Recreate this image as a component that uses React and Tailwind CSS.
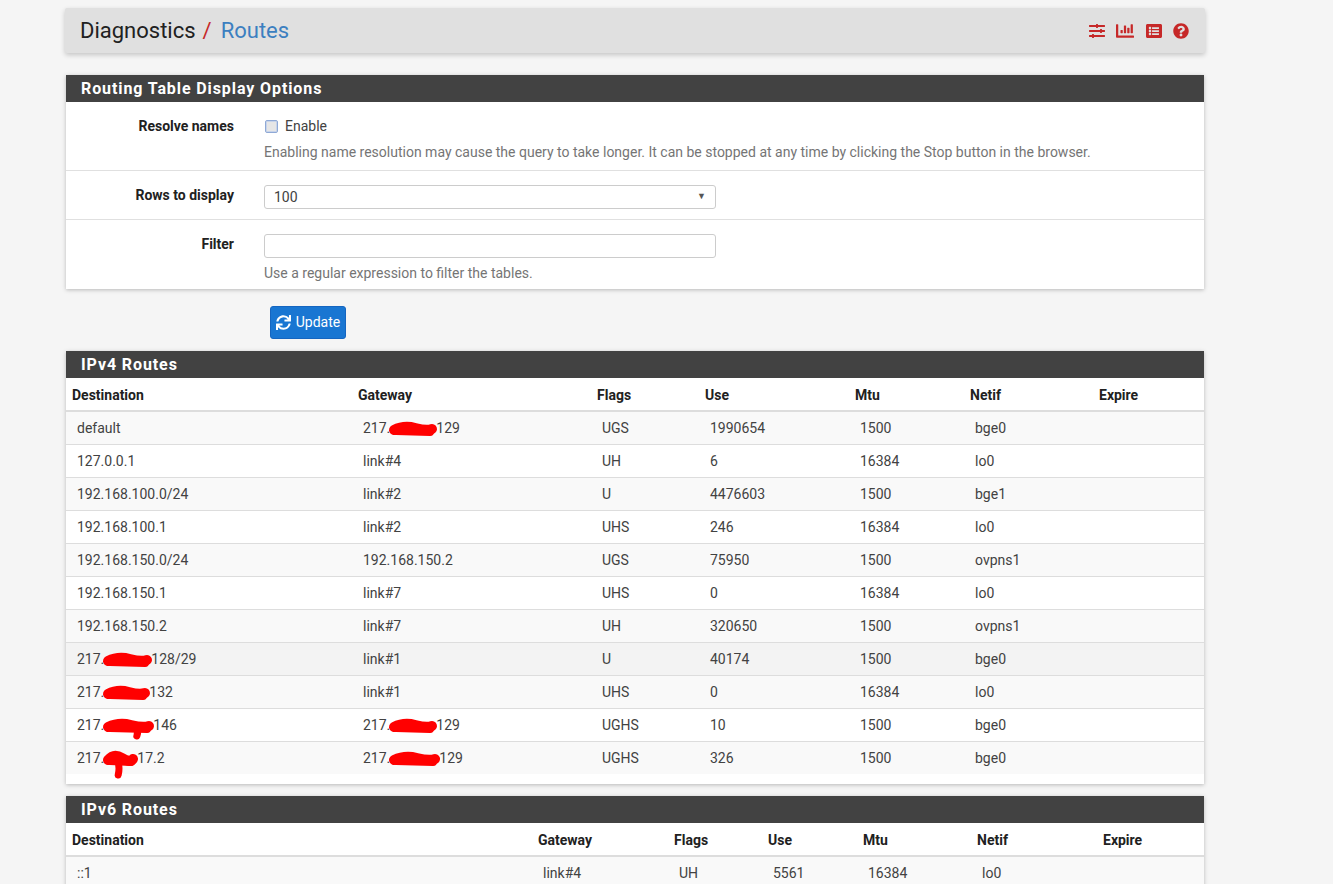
import React from "react";
import { FaSlidersH, FaChartBar, FaListAlt, FaQuestionCircle, FaSync } from "react-icons/fa";

function Redact({ w, drip = 0, dripX = 0.5, bump = 0 }) {
  const h = 14;
  return (
    <span className="relative inline-block align-middle" style={{ width: w, height: h }}>
      <svg
        className="absolute left-0 top-0 overflow-visible"
        width={w}
        height={h}
        viewBox={`0 0 ${w} ${h}`}
      >
        <path
          d={`M4 ${h / 2 + 1} Q ${w * 0.3} ${h / 2 - 4 - bump} ${w * 0.55} ${h / 2 - 1} T ${w - 4} ${h / 2}`}
          stroke="#ff0000"
          strokeWidth="10"
          strokeLinecap="round"
          fill="none"
        />
        <path
          d={`M6 ${h / 2 + 2} L ${w - 6} ${h / 2 + 3}`}
          stroke="#ff0000"
          strokeWidth="8"
          strokeLinecap="round"
          fill="none"
        />
        {drip > 0 && (
          <path
            d={`M${w * dripX} ${h / 2} Q ${w * dripX + 3} ${h / 2 + drip / 2} ${w * dripX + 1} ${h / 2 + drip}`}
            stroke="#ff0000"
            strokeWidth="7"
            strokeLinecap="round"
            fill="none"
          />
        )}
      </svg>
    </span>
  );
}

const v4 = [
  [<>default</>, <>217.<Redact w={46} />129</>, "UGS", "1990654", "1500", "bge0"],
  ["127.0.0.1", "link#4", "UH", "6", "16384", "lo0"],
  ["192.168.100.0/24", "link#2", "U", "4476603", "1500", "bge1"],
  ["192.168.100.1", "link#2", "UHS", "246", "16384", "lo0"],
  ["192.168.150.0/24", "192.168.150.2", "UGS", "75950", "1500", "ovpns1"],
  ["192.168.150.1", "link#7", "UHS", "0", "16384", "lo0"],
  ["192.168.150.2", "link#7", "UH", "320650", "1500", "ovpns1"],
  [<>217.<Redact w={47} />128/29</>, "link#1", "U", "40174", "1500", "bge0"],
  [<>217.<Redact w={45} />132</>, "link#1", "UHS", "0", "16384", "lo0"],
  [<>217.<Redact w={49} drip={10} dripX={0.65} />146</>, <>217.<Redact w={46} />129</>, "UGHS", "10", "1500", "bge0"],
  [<>217.<Redact w={33} drip={16} dripX={0.4} bump={2} />17.2</>, <>217.<Redact w={49} />129</>, "UGHS", "326", "1500", "bge0"],
];

const v6 = [["::1", "link#4", "UH", "5561", "16384", "lo0"]];

const heads = ["Destination", "Gateway", "Flags", "Use", "Mtu", "Netif", "Expire"];

function PanelHeader({ children }) {
  return (
    <div className="bg-[#424242] h-[27px] flex items-center pl-[15px] pt-[1px] text-white font-bold text-[16px] tracking-[0.9px]">
      {children}
    </div>
  );
}

function RouteTable({ title, rows, widths, hoverIndex = -1 }) {
  return (
    <div className="bg-white shadow-[0_1px_4px_rgba(0,0,0,0.25)]">
      <PanelHeader>{title}</PanelHeader>
      <div className="pb-[10px]">
        <table className="w-full table-fixed border-collapse text-[14px]">
          <colgroup>
            {widths.map((w, i) => (
              <col key={i} style={{ width: w }} />
            ))}
          </colgroup>
          <thead>
            <tr className="h-[33px] border-b-2 border-[#dddddd]">
              {heads.map((h) => (
                <th key={h} className="text-left font-bold text-[#212121] pl-[6px] pt-[2px] align-middle">
                  {h}
                </th>
              ))}
            </tr>
          </thead>
          <tbody>
            {rows.map((r, i) => (
              <tr
                key={i}
                className={`h-[33px] border-t border-[#dddddd] ${
                  i === hoverIndex ? "bg-[#f3f3f3]" : i % 2 === 0 ? "bg-[#f9f9f9]" : "bg-white"
                }`}
              >
                {r.map((c, j) => (
                  <td key={j} className="pl-[11px] pt-[1px] text-[#424242] align-middle whitespace-nowrap">
                    {c}
                  </td>
                ))}
                <td className="pl-[11px]"></td>
              </tr>
            ))}
          </tbody>
        </table>
      </div>
    </div>
  );
}

export default function App() {
  return (
    <div
      className="min-h-[884px] bg-[#f5f5f5] pt-[8px] pl-[65px]"
      style={{ fontFamily: "Roboto, 'Open Sans', sans-serif" }}
    >
      <div className="w-[1140px]">
        {/* Page header */}
        <div className="h-[45px] bg-[#e0e0e0] rounded-[2px] shadow-[0_2px_5px_rgba(0,0,0,0.2)] flex items-center justify-between pl-[15px] pr-[16px]">
          <div className="text-[22px] text-[#212121] leading-none">
            Diagnostics<span className="text-[#c62828] ml-[7px] mr-[9px]">/</span>
            <span className="text-[#3c7fc0]">Routes</span>
          </div>
          <div className="flex items-center gap-[10px] text-[#c62828]">
            <FaSlidersH className="w-[16px] h-[16px]" />
            <FaChartBar className="w-[20px] h-[18px]" />
            <FaListAlt className="w-[18px] h-[16px]" />
            <FaQuestionCircle className="w-[16px] h-[16px]" />
          </div>
        </div>

        {/* Options panel */}
        <div className="mt-[22px] mx-[1px] bg-white shadow-[0_1px_4px_rgba(0,0,0,0.25)]">
          <PanelHeader>Routing Table Display Options</PanelHeader>
          <div className="text-[14px]">
            <div className="flex h-[68px] pt-[16px]">
              <div className="w-[168px] text-right font-bold text-[#212121] leading-[17px]">Resolve names</div>
              <div className="ml-[30px]">
                <div className="flex items-center h-[17px]">
                  <span className="inline-block w-[13px] h-[13px] ml-[1px] rounded-[2px] border border-[#8fa9d6] bg-[#e6e6e6] shadow-[inset_0_0_0_1px_#c8d4ea]"></span>
                  <span className="ml-[7px] text-[#424242]">Enable</span>
                </div>
                <div className="mt-[7px] text-[#757575]">
                  Enabling name resolution may cause the query to take longer. It can be stopped at any time by clicking the Stop button in the browser.
                </div>
              </div>
            </div>
            <div className="flex h-[49px] border-t border-[#e0e0e0] pt-[14px]">
              <div className="w-[168px] text-right font-bold text-[#212121] leading-[20px]">Rows to display</div>
              <div className="ml-[30px] w-[452px] h-[24px] border border-[#cccccc] rounded-[3px] flex items-center justify-between px-[9px] text-[#424242]">
                <span>100</span>
                <span className="text-[9px] text-[#555]">▼</span>
              </div>
            </div>
            <div className="flex h-[70px] border-t border-[#e0e0e0] pt-[14px]">
              <div className="w-[168px] text-right font-bold text-[#212121] leading-[20px]">Filter</div>
              <div className="ml-[30px]">
                <div className="w-[452px] h-[24px] border border-[#cccccc] rounded-[3px]"></div>
                <div className="mt-[5px] text-[#757575]">Use a regular expression to filter the tables.</div>
              </div>
            </div>
          </div>
        </div>

        {/* Update button */}
        <div className="mt-[17px] ml-[205px]">
          <button className="h-[33px] w-[76px] bg-[#1976d2] text-white text-[14px] rounded-[3px] flex items-center justify-center gap-[5px] border border-[#1565c0]">
            <FaSync className="w-[15px] h-[15px]" />
            Update
          </button>
        </div>

        <div className="mt-[12px] mx-[1px]">
          <RouteTable
            title="IPv4 Routes"
            rows={v4}
            widths={[286, 239, 108, 150, 115, 129, 111]}
            hoverIndex={7}
          />
        </div>
        <div className="mt-[12px] mx-[1px]">
          <RouteTable
            title="IPv6 Routes"
            rows={v6}
            widths={[466, 136, 94, 95, 114, 126, 107]}
          />
        </div>
      </div>
    </div>
  );
}
